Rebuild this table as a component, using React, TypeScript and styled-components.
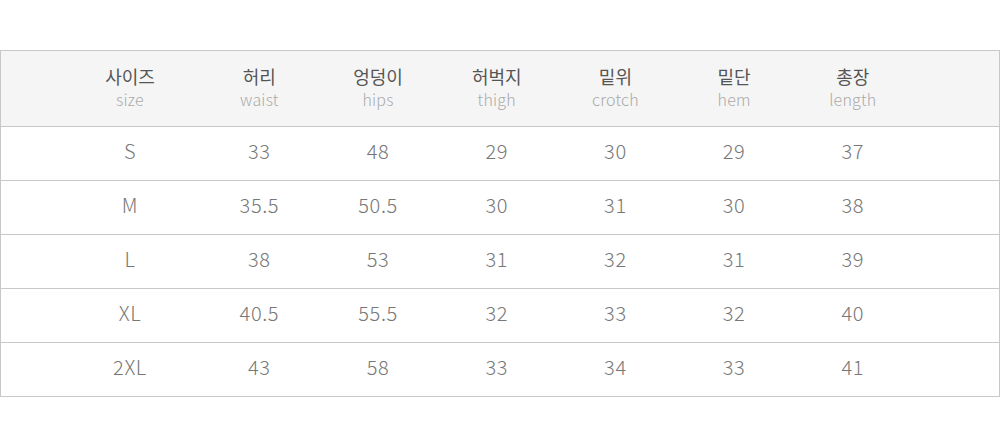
import React from 'react';
import styled, { createGlobalStyle } from 'styled-components';

interface SizeRow {
  size: string,
  values: string[]
}

const GlobalStyle = createGlobalStyle`
  html, body {
    margin: 0;
    padding: 0;
    background: #fff;
    font-family: "Noto Sans CJK KR", "Noto Sans", sans-serif;
  }
`

const headers = [
  { ko: '사이즈', en: 'size' },
  { ko: '허리', en: 'waist' },
  { ko: '엉덩이', en: 'hips' },
  { ko: '허벅지', en: 'thigh' },
  { ko: '밑위', en: 'crotch' },
  { ko: '밑단', en: 'hem' },
  { ko: '총장', en: 'length' },
]

const rows: SizeRow[] = [
  { size: 'S', values: ['33', '48', '29', '30', '29', '37'] },
  { size: 'M', values: ['35.5', '50.5', '30', '31', '30', '38'] },
  { size: 'L', values: ['38', '53', '31', '32', '31', '39'] },
  { size: 'XL', values: ['40.5', '55.5', '32', '33', '32', '40'] },
  { size: '2XL', values: ['43', '58', '33', '34', '33', '41'] },
]

const Page = styled.div`
  padding-top: 50px;
`

const Table = styled.div`
  width: 1000px;
  box-sizing: border-box;
  border: 1px solid #c8c8c8;
`

const Row = styled.div<{ $head?: boolean }>`
  display: grid;
  grid-template-columns: 140px repeat(6, 118.7px) 1fr;
  padding-left: 59px;
  box-sizing: border-box;
  padding-bottom: ${p => p.$head ? '4px' : '5px'};
  height: ${p => p.$head ? '75px' : '54px'};
  background: ${p => p.$head ? '#f5f5f5' : '#fff'};
  border-top: ${p => p.$head ? 'none' : '1px solid #c8c8c8'};
`

const Cell = styled.div`
  display: flex;
  flex-direction: column;
  align-items: center;
  justify-content: center;
  font-size: 20px;
  font-weight: 300;
  letter-spacing: 0.6px;
  color: #777;
  line-height: 1;
`

const HeadKo = styled.span`
  font-size: 18px;
  font-weight: 400;
  letter-spacing: 0;
  color: #555;
  line-height: 1;
`

const HeadEn = styled.span`
  margin-top: 6px;
  font-size: 16px;
  font-weight: 300;
  letter-spacing: 0.2px;
  color: #aaa;
  line-height: 1;
`

export default function App() {
  return (
    <Page>
      <GlobalStyle />
      <Table>
        <Row $head>
          {headers.map((h) => (
            <Cell key={h.en}>
              <HeadKo>{h.ko}</HeadKo>
              <HeadEn>{h.en}</HeadEn>
            </Cell>
          ))}
        </Row>
        {rows.map((row) => (
          <Row key={row.size}>
            <Cell>{row.size}</Cell>
            {row.values.map((v, i) => (
              <Cell key={i}>{v}</Cell>
            ))}
          </Row>
        ))}
      </Table>
    </Page>
  )
}
